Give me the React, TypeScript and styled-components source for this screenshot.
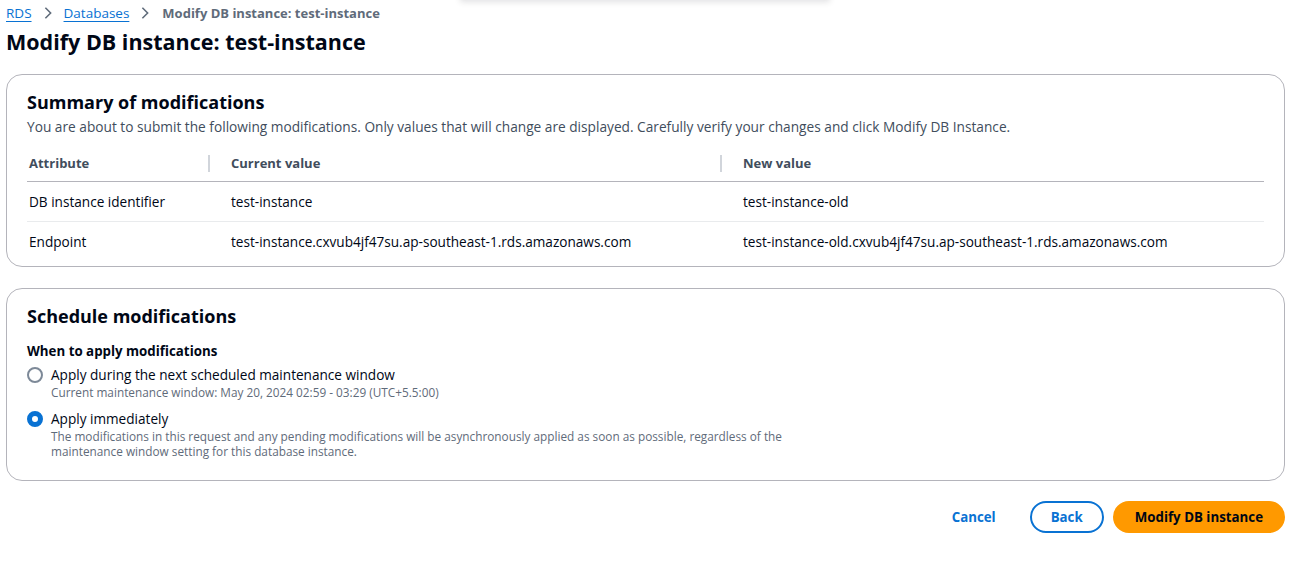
import React from "react";
import styled, { createGlobalStyle } from "styled-components";

const GlobalStyle = createGlobalStyle`
  body {
    margin: 0;
    background: #ffffff;
    font-family: "Open Sans", "Noto Sans", Arial, sans-serif;
    color: #000716;
  }
`;

const Page = styled.div`
  position: relative;
  width: 1313px;
  height: 567px;
  box-sizing: border-box;
  padding: 4px 28px 0 6px;
  overflow: hidden;
`;

const TopShadow = styled.div`
  position: absolute;
  top: -10px;
  left: 460px;
  width: 370px;
  height: 10px;
  box-shadow: 0 2px 6px rgba(0, 7, 22, 0.12);
  background: #fff;
`;

const Breadcrumbs = styled.nav`
  display: flex;
  align-items: center;
  gap: 10px;
  height: 18px;
  font-size: 13.5px;
`;

const Crumb = styled.a`
  color: #0972d3;
  text-decoration: underline;
  text-underline-offset: 3px;
  text-decoration-thickness: 1px;
`;

const CurrentCrumb = styled.span`
  color: #5f6b7a;
  font-weight: 700;
  font-size: 13px;
  margin-left: 1px;
`;

const Title = styled.h1`
  margin: 6px 0 0;
  font-size: 21.5px;
  line-height: 28px;
  font-weight: 700;
  color: #000716;
`;

const Card = styled.section<{ $mt?: number; $pb?: number }>`
  margin-top: ${(p) => p.$mt ?? 22}px;
  border: 1px solid #b4b4bb;
  border-radius: 16px;
  padding: 16px 20px ${(p) => p.$pb ?? 4}px 20px;
`;

const CardTitle = styled.h2`
  margin: 0;
  font-size: 18px;
  line-height: 22px;
  font-weight: 700;
  color: #000716;
`;

const CardDesc = styled.p`
  margin: 4px 0 0;
  font-size: 13.7px;
  line-height: 20px;
  color: #414d5c;
`;

const Table = styled.div`
  margin-top: 8px;
  display: grid;
  grid-template-columns: 183px 512px 1fr;
`;

const HeadCell = styled.div<{ $first?: boolean; $sep?: boolean }>`
  position: relative;
  height: 36px;
  display: flex;
  align-items: center;
  padding-left: ${(p) => (p.$first ? 2 : 21)}px;
  font-size: 13px;
  font-weight: 700;
  color: #414d5c;
  border-bottom: 1px solid #b4b4bb;

  &::after {
    content: "";
    display: ${(p) => (p.$sep ? "block" : "none")};
    position: absolute;
    right: 0;
    top: 10px;
    height: 17px;
    width: 2px;
    background: #d1d5db;
  }
`;

const Cell = styled.div<{ $first?: boolean; $last?: boolean }>`
  height: 39px;
  display: flex;
  align-items: center;
  padding-left: ${(p) => (p.$first ? 2 : 21)}px;
  font-size: 13.6px;
  color: #000716;
  border-bottom: ${(p) => (p.$last ? "none" : "1px solid #e9ebed")};
`;

const FieldLabel = styled.div`
  margin-top: 14px;
  font-size: 13.3px;
  line-height: 20px;
  font-weight: 700;
`;

const RadioRow = styled.label<{ $gap?: number }>`
  display: grid;
  grid-template-columns: 16px 1fr;
  column-gap: 8px;
  margin-top: ${(p) => p.$gap ?? 4}px;
`;

const RadioDot = styled.span<{ $checked?: boolean }>`
  margin-top: 2px;
  width: 16px;
  height: 16px;
  box-sizing: border-box;
  border-radius: 50%;
  border: ${(p) => (p.$checked ? "5px solid #0972d3" : "2px solid #7d8998")};
  background: #fff;
`;

const RadioLabel = styled.div`
  font-size: 13.6px;
  line-height: 20px;
  color: #000716;
`;

const RadioDesc = styled.div`
  grid-column: 2;
  font-size: 11.8px;
  line-height: 15px;
  color: #5f6b7a;
  max-width: 740px;
`;

const Actions = styled.div`
  margin-top: 20px;
  display: flex;
  justify-content: flex-end;
  align-items: center;
  gap: 9px;
`;

const Button = styled.button<{ $variant: "link" | "normal" | "primary" }>`
  height: 32px;
  box-sizing: border-box;
  border-radius: 20px;
  font-family: inherit;
  font-size: 13.3px;
  font-weight: 700;
  cursor: pointer;
  padding: 0 ${(p) => (p.$variant === "normal" ? 19 : 20)}px;
  margin-right: ${(p) => (p.$variant === "link" ? 3 : 0)}px;
  border: 2px solid
    ${(p) => (p.$variant === "normal" ? "#0972d3" : p.$variant === "primary" ? "#ff9900" : "transparent")};
  background: ${(p) => (p.$variant === "primary" ? "#ff9900" : "#ffffff")};
  color: ${(p) => (p.$variant === "primary" ? "#000716" : "#0972d3")};
`;

const Chevron = () => (
  <svg width="12" height="14" viewBox="0 0 12 16" fill="none">
    <path d="M3 2l6 6-6 6" stroke="#5f6b7a" strokeWidth="1.8" />
  </svg>
);

const rows = [
  ["DB instance identifier", "test-instance", "test-instance-old"],
  [
    "Endpoint",
    "test-instance.cxvub4jf47su.ap-southeast-1.rds.amazonaws.com",
    "test-instance-old.cxvub4jf47su.ap-southeast-1.rds.amazonaws.com",
  ],
];

export default function App() {
  return (
    <Page>
      <GlobalStyle />
      <TopShadow />
      <Breadcrumbs>
        <Crumb>RDS</Crumb>
        <Chevron />
        <Crumb>Databases</Crumb>
        <Chevron />
        <CurrentCrumb>Modify DB instance: test-instance</CurrentCrumb>
      </Breadcrumbs>
      <Title>Modify DB instance: test-instance</Title>

      <Card $mt={18} $pb={5}>
        <CardTitle>Summary of modifications</CardTitle>
        <CardDesc>
          You are about to submit the following modifications. Only values that will change are displayed. Carefully
          verify your changes and click Modify DB Instance.
        </CardDesc>
        <Table>
          <HeadCell $first $sep>Attribute</HeadCell>
          <HeadCell $sep>Current value</HeadCell>
          <HeadCell>New value</HeadCell>
          {rows.map((r, i) =>
            r.map((v, j) => (
              <Cell key={`${i}-${j}`} $first={j === 0} $last={i === rows.length - 1}>
                {v}
              </Cell>
            ))
          )}
        </Table>
      </Card>

      <Card $mt={21} $pb={21}>
        <CardTitle>Schedule modifications</CardTitle>
        <FieldLabel>When to apply modifications</FieldLabel>
        <RadioRow>
          <RadioDot />
          <RadioLabel>Apply during the next scheduled maintenance window</RadioLabel>
          <RadioDesc>Current maintenance window: May 20, 2024 02:59 - 03:29 (UTC+5.5:00)</RadioDesc>
        </RadioRow>
        <RadioRow $gap={9}>
          <RadioDot $checked />
          <RadioLabel>Apply immediately</RadioLabel>
          <RadioDesc>
            The modifications in this request and any pending modifications will be asynchronously applied as soon as
            possible, regardless of the maintenance window setting for this database instance.
          </RadioDesc>
        </RadioRow>
      </Card>

      <Actions>
        <Button $variant="link">Cancel</Button>
        <Button $variant="normal">Back</Button>
        <Button $variant="primary">Modify DB instance</Button>
      </Actions>
    </Page>
  );
}
